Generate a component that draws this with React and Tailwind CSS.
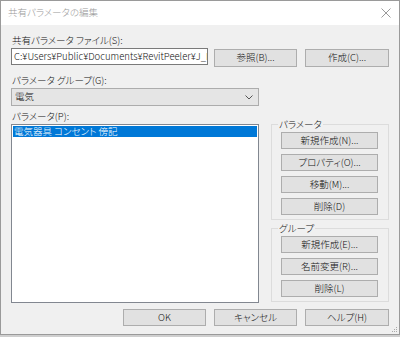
import React from "react";

const font = "[font-family:'Noto_Sans_CJK_JP','Noto_Sans',sans-serif] [font-feature-settings:'palt'] font-light";

function Btn({ children, className = "" }) {
  return (
    <div
      className={`flex items-center justify-center bg-[#e1e1e1] border border-[#adadad] text-[9.5px] leading-none text-[#111] ${className}`}
    >
      {children}
    </div>
  );
}

function Group({ title, children, className = "" }) {
  return (
    <div className={`relative border border-[#dcdcdc] pl-[9px] pt-[7px] pb-[4px] ${className}`}>
      <span className="absolute left-[6px] top-[-8px] bg-[#f0f0f0] px-[1px] text-[9.5px] leading-[14px] text-[#111]">
        {title}
      </span>
      <div className="flex flex-col gap-[5px]">{children}</div>
    </div>
  );
}

export default function App() {
  return (
    <div className={`w-[400px] h-[337px] bg-[#cfcfcf] ${font}`}>
      <div className="w-[400px] h-[335px] border border-[#9a9a9a] flex flex-col bg-[#f0f0f0]">
        {/* title bar */}
        <div className="h-[24px] bg-white flex items-center justify-between pl-[7px] pr-[6px] shrink-0">
          <span className="text-[9.5px] text-[#999] leading-none">共有パラメータの編集</span>
          <svg width="10" height="10" viewBox="0 0 10 10" className="mr-[2px]">
            <path d="M0.5 0.5 L9.5 9.5 M9.5 0.5 L0.5 9.5" stroke="#9a9a9a" strokeWidth="1" fill="none" />
          </svg>
        </div>

        {/* body */}
        <div className="relative flex-1 flex flex-col pl-[10px] pr-[10px] pt-[8px]">
          <div className="h-[14px] pl-[1px] text-[9.5px] leading-[14px] text-[#111]">共有パラメータ ファイル(S):</div>
          <div className="mt-[1px] flex items-start">
            <div className="w-[197px] h-[17px] shrink-0 bg-white border border-[#7a7a7a] flex items-center pl-[2px] overflow-hidden whitespace-nowrap text-[9.5px] leading-none text-[#111]">
              C:¥Users¥Public¥Documents¥RevitPeeler¥J_F
            </div>
            <Btn className="ml-[6px] mt-[1px] w-[83px] h-[18px]">参照(B)...</Btn>
            <Btn className="ml-[8px] mt-[1px] w-[84px] h-[18px]">作成(C)...</Btn>
          </div>

          <div className="mt-[6px] h-[14px] pl-[1px] text-[9.5px] leading-[14px] text-[#111]">パラメータ グループ(G):</div>
          <div className="mt-[1px] w-[248px] h-[18px] bg-[#e5e5e5] border border-[#acacac] flex items-center justify-between pl-[3px] pr-[5px] text-[9.5px] leading-none text-[#111]">
            <span>電気</span>
            <svg width="8" height="5" viewBox="0 0 8 5">
              <path d="M0.5 0.5 L4 4 L7.5 0.5" stroke="#555" strokeWidth="1" fill="none" />
            </svg>
          </div>

          <div className="mt-[3px] h-[14px] pl-[1px] text-[9.5px] leading-[14px] text-[#111]">パラメータ(P):</div>
          <div className="mt-[1px] flex items-start">
            <div className="w-[248px] h-[179px] bg-white border border-[#828790] p-[1px]">
              <div className="h-[11px] bg-[#0078d7] flex items-center pl-[1px] text-[9.5px] leading-none text-white whitespace-nowrap">
                電気器具 コンセント 傍記
              </div>
            </div>
            <div className="ml-[12px] w-[118px] flex flex-col">
              <Group title="パラメータ">
                <Btn className="w-[97px] h-[17px]">新規作成(N)...</Btn>
                <Btn className="w-[97px] h-[17px]">プロパティ(O)...</Btn>
                <Btn className="w-[97px] h-[17px]">移動(M)...</Btn>
                <Btn className="w-[97px] h-[17px]">削除(D)</Btn>
              </Group>
              <Group title="グループ" className="mt-[8px]">
                <Btn className="w-[97px] h-[17px]">新規作成(E)...</Btn>
                <Btn className="w-[97px] h-[17px]">名前変更(R)...</Btn>
                <Btn className="w-[97px] h-[17px]">削除(L)</Btn>
              </Group>
            </div>
          </div>

          <div className="mt-[6px] flex justify-end gap-[8px]">
            <Btn className="w-[83px] h-[17px]">OK</Btn>
            <Btn className="w-[83px] h-[17px]">キャンセル</Btn>
            <Btn className="w-[84px] h-[17px]">ヘルプ(H)</Btn>
          </div>

          <svg width="6" height="6" viewBox="0 0 6 6" className="absolute right-[1px] bottom-[1px]">
            <rect x="4" y="0" width="1" height="1" fill="#aaa" />
            <rect x="2" y="2" width="1" height="1" fill="#aaa" />
            <rect x="4" y="2" width="1" height="1" fill="#aaa" />
            <rect x="0" y="4" width="1" height="1" fill="#aaa" />
            <rect x="2" y="4" width="1" height="1" fill="#aaa" />
            <rect x="4" y="4" width="1" height="1" fill="#aaa" />
          </svg>
        </div>
      </div>
    </div>
  );
}
